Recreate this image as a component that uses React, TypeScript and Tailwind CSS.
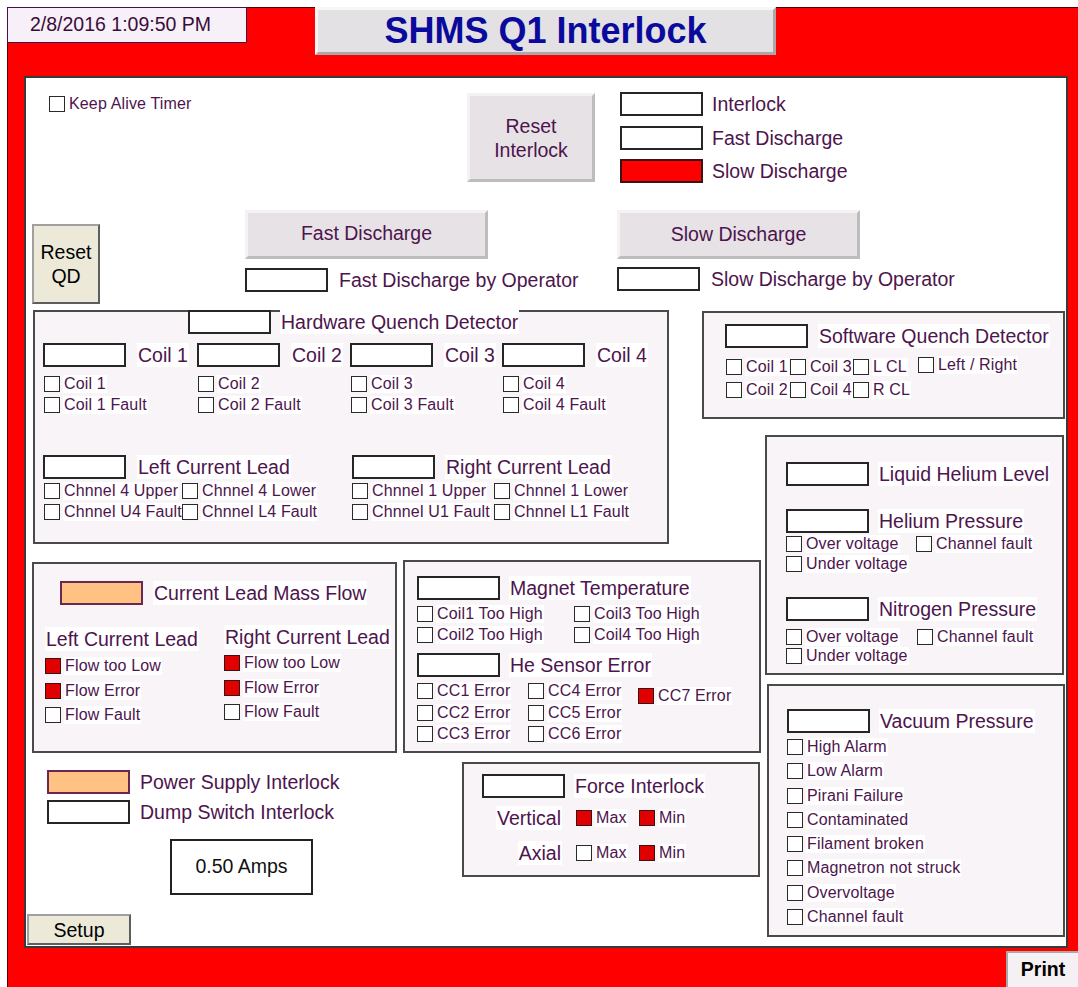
import React from "react";

type Fill = "white" | "red" | "orange";

function Box({ fill = "white" }: { fill?: Fill }) {
  const color =
    fill === "red"
      ? "bg-[#ff0000] border-[#3a1414]"
      : fill === "orange"
      ? "bg-[#ffc283] border-[#6a2850]"
      : "bg-white border-[#262626]";
  return <div className={"w-[83px] h-[24px] border-2 shrink-0 " + color} />;
}

function Lbl({ children, className = "" }: { children: React.ReactNode; className?: string }) {
  return (
    <span
      className={
        "text-[19.5px] leading-[24px] text-[#4d144d] bg-white px-[1px] whitespace-nowrap " + className
      }
    >
      {children}
    </span>
  );
}

function Check({ label, on = false }: { label: string; on?: boolean }) {
  return (
    <div className="flex items-center h-[16px]">
      <span
        className={
          "w-[16px] h-[16px] border-[1.5px] shrink-0 " +
          (on ? "bg-[#e00000] border-[#3a1414]" : "bg-white border-[#2a2a2a]")
        }
      />
      <span className="ml-[3px] text-[16px] leading-[18px] tracking-[0.15px] text-[#4d144d] bg-white px-[1px] whitespace-nowrap">
        {label}
      </span>
    </div>
  );
}

function Ind({ label, fill, gap = "ml-[9px]", className = "" }: { label: string; fill?: Fill; gap?: string; className?: string }) {
  return (
    <div className={"flex items-center " + className}>
      <Box fill={fill} />
      <Lbl className={gap}>{label}</Lbl>
    </div>
  );
}

const panel = "border-2 border-[#4a4a4a] bg-[#f8f4f8] shrink-0";
const hmiBtn =
  "bg-[#e6e2e6] border-[3px] border-t-[#f4f2f4] border-l-[#f4f2f4] border-b-[#bdbdbd] border-r-[#bdbdbd] text-[19.5px] leading-[24px] text-[#4d144d] flex flex-col items-center justify-center shrink-0";
const winBtn =
  "bg-[#ece9d8] border-2 border-[#a0a0a0] border-b-[#5e5e5e] border-r-[#5e5e5e] text-[19.5px] leading-[24px] text-black flex flex-col items-center justify-center shrink-0";

function HardwareQD() {
  const coils = [1, 2, 3, 4];
  return (
    <div className={panel + " ml-[7px] w-[636px] h-[234px]"}>
      <Ind className="-mt-[2px] ml-[153px]" label="Hardware Quench Detector" />
      <div className="mt-[9px] ml-[8px] grid grid-cols-[154px_153px_152px_auto]">
        {coils.map((c) => (
          <div key={c}>
            <Ind label={"Coil " + c} gap="ml-[11px]" />
            <div className="ml-[1px] mt-[9px] flex flex-col gap-[5px]">
              <Check label={"Coil " + c} />
              <Check label={"Coil " + c + " Fault"} />
            </div>
          </div>
        ))}
      </div>
      <div className="mt-[42px] ml-[8px] flex items-start">
        <div className="w-[309px] shrink-0">
          <Ind label="Left Current Lead" gap="ml-[11px]" />
          <div className="mt-[4px] ml-[1px] grid grid-cols-[138px_auto] gap-y-[5px]">
            <Check label="Chnnel 4 Upper" />
            <Check label="Chnnel 4 Lower" />
            <Check label="Chnnel U4 Fault" />
            <Check label="Chnnel L4 Fault" />
          </div>
        </div>
        <div>
          <Ind label="Right Current Lead" gap="ml-[10px]" />
          <div className="mt-[4px] grid grid-cols-[142px_auto] gap-y-[5px]">
            <Check label="Chnnel 1 Upper" />
            <Check label="Chnnel 1 Lower" />
            <Check label="Chnnel U1 Fault" />
            <Check label="Chnnel L1 Fault" />
          </div>
        </div>
      </div>
    </div>
  );
}

function SoftwareQD() {
  return (
    <div className={panel + " mt-[1px] w-[363px] h-[108px]"}>
      <Ind className="ml-[21px] mt-[11px]" label="Software Quench Detector" gap="ml-[10px]" />
      <div className="ml-[22px] mt-[11px] grid grid-cols-[64px_63px_65px_auto] gap-y-[7px]">
        <Check label="Coil 1" />
        <Check label="Coil 3" />
        <Check label="L CL" />
        <div className="-mt-[2px]">
          <Check label="Left / Right" />
        </div>
        <Check label="Coil 2" />
        <Check label="Coil 4" />
        <Check label="R CL" />
        <div />
      </div>
    </div>
  );
}

function Helium() {
  return (
    <div className={panel + " ml-[63px] mt-[16px] w-[299px] h-[240px]"}>
      <div className="ml-[19px] mt-[25px]">
        <Ind label="Liquid Helium Level" />
        <Ind className="mt-[23px]" label="Helium Pressure" />
        <div className="mt-[3px] grid grid-cols-[130px_auto] gap-y-[4px]">
          <Check label="Over voltage" />
          <Check label="Channel fault" />
          <Check label="Under voltage" />
        </div>
        <Ind className="mt-[25px]" label="Nitrogen Pressure" />
        <div className="mt-[8px] grid grid-cols-[131px_auto] gap-y-[3px]">
          <Check label="Over voltage" />
          <Check label="Channel fault" />
          <Check label="Under voltage" />
        </div>
      </div>
    </div>
  );
}

function Vacuum() {
  const items = [
    "High Alarm",
    "Low Alarm",
    "Pirani Failure",
    "Contaminated",
    "Filament broken",
    "Magnetron not struck",
    "Overvoltage",
    "Channel fault",
  ];
  return (
    <div className={panel + " ml-[65px] mt-[9px] w-[298px] h-[253px]"}>
      <Ind className="ml-[18px] mt-[23px]" label="Vacuum Pressure" />
      <div className="ml-[18px] mt-[6px] flex flex-col gap-[8.3px]">
        {items.map((i) => (
          <Check key={i} label={i} />
        ))}
      </div>
    </div>
  );
}

function MassFlow() {
  return (
    <div className={panel + " ml-[6px] mt-[2px] w-[365px] h-[191px]"}>
      <Ind className="ml-[26px] mt-[17px]" label="Current Lead Mass Flow" fill="orange" gap="ml-[10px]" />
      <div className="ml-[11px] mt-[22px] flex items-start">
        <div className="w-[179px] shrink-0">
          <div className="flex">
            <Lbl>Left Current Lead</Lbl>
          </div>
          <div className="mt-[7px] flex flex-col gap-[8.5px]">
            <Check label="Flow too Low" on />
            <Check label="Flow Error" on />
            <Check label="Flow Fault" />
          </div>
        </div>
        <div className="-mt-[2px]">
          <div className="flex">
            <Lbl>Right Current Lead</Lbl>
          </div>
          <div className="mt-[6px] flex flex-col gap-[8.5px]">
            <Check label="Flow too Low" on />
            <Check label="Flow Error" on />
            <Check label="Flow Fault" />
          </div>
        </div>
      </div>
    </div>
  );
}

function Magnet() {
  return (
    <div className={panel + " ml-[6px] w-[358px] h-[193px]"}>
      <Ind className="ml-[12px] mt-[14px]" label="Magnet Temperature" />
      <div className="ml-[12px] mt-[6px] grid grid-cols-[157px_auto] gap-y-[5px]">
        <Check label="Coil1 Too High" />
        <Check label="Coil3 Too High" />
        <Check label="Coil2 Too High" />
        <Check label="Coil4 Too High" />
      </div>
      <Ind className="ml-[12px] mt-[10px]" label="He Sensor Error" />
      <div className="ml-[12px] mt-[6px] flex items-start">
        <div className="w-[111px] shrink-0 flex flex-col gap-[5.5px]">
          <Check label="CC1 Error" />
          <Check label="CC2 Error" />
          <Check label="CC3 Error" />
        </div>
        <div className="w-[110px] shrink-0 flex flex-col gap-[5.5px]">
          <Check label="CC4 Error" />
          <Check label="CC5 Error" />
          <Check label="CC6 Error" />
        </div>
        <div className="mt-[5px]">
          <Check label="CC7 Error" on />
        </div>
      </div>
    </div>
  );
}

function Force() {
  return (
    <div className={panel + " w-[298px] h-[115px]"}>
      <Ind className="ml-[18px] mt-[10px]" label="Force Interlock" />
      <div className="mt-[9px] h-[22px] flex items-center">
        <div className="w-[98px] shrink-0 flex justify-end">
          <Lbl>Vertical</Lbl>
        </div>
        <div className="ml-[14px] w-[63px] shrink-0">
          <Check label="Max" on />
        </div>
        <Check label="Min" on />
      </div>
      <div className="mt-[13px] h-[22px] flex items-center">
        <div className="w-[98px] shrink-0 flex justify-end">
          <Lbl>Axial</Lbl>
        </div>
        <div className="ml-[14px] w-[63px] shrink-0">
          <Check label="Max" />
        </div>
        <Check label="Min" on />
      </div>
    </div>
  );
}

export default function App() {
  return (
    <div className="w-[1078px] h-[987px] bg-white overflow-hidden font-['Liberation_Sans',Arial,sans-serif]">
      <div className="ml-[7px] mt-[7px] w-[1071px] h-[980px] bg-[#ff0000] border-l border-t border-[#5a0000]">
        {/* title bar */}
        <div className="flex items-start h-[68px]">
          <div className="-ml-px -mt-px w-[240px] h-[36px] bg-[#f8f0f8] border border-[#4a104a] flex items-center pl-[22px] text-[19.5px] text-[#3a0c3a] whitespace-nowrap">
            2/8/2016 1:09:50 PM
          </div>
          <div className="ml-[68px] -mt-px w-[461px] h-[48px] bg-[#e4e1e4] border-[3px] border-t-[#f6f6f6] border-l-[#f6f6f6] border-b-[#a9a9a9] border-r-[#a9a9a9] flex items-center justify-center text-[36px] leading-none font-bold text-[#0a0a9c]">
            SHMS Q1 Interlock
          </div>
        </div>

        {/* main screen */}
        <div className="ml-[16px] w-[1044px] h-[872px] bg-white border-2 border-[#3a3a3a]">
          <div className="flex h-[232px]">
            <div className="w-[219px] shrink-0">
              <div className="ml-[23px] mt-[18px]">
                <Check label="Keep Alive Timer" />
              </div>
              <div className={winBtn + " ml-[6px] mt-[112px] w-[68px] h-[80px]"}>
                <span>Reset</span>
                <span>QD</span>
              </div>
            </div>
            <div className="flex-1">
              <div className="flex items-start mt-[14px] ml-[222px]">
                <div className={hmiBtn + " mt-[1px] w-[128px] h-[89px]"}>
                  <span>Reset</span>
                  <span>Interlock</span>
                </div>
                <div className="ml-[25px] flex flex-col gap-[9.5px]">
                  <div className="flex items-center">
                    <Box />
                    <Lbl className="ml-[8px] text-[#1e1e1e]">Interlock</Lbl>
                  </div>
                  <Ind label="Fast Discharge" gap="ml-[8px]" />
                  <Ind label="Slow Discharge" fill="red" gap="ml-[8px]" />
                </div>
              </div>
              <div className="flex items-start mt-[27px]">
                <div className="w-[372px] shrink-0">
                  <div className={hmiBtn + " w-[243px] h-[49px] pb-[4px]"}>Fast Discharge</div>
                  <Ind className="mt-[9px]" label="Fast Discharge by Operator" gap="ml-[10px]" />
                </div>
                <div>
                  <div className={hmiBtn + " w-[243px] h-[49px] pb-[2px]"}>Slow Discharge</div>
                  <Ind className="mt-[8px]" label="Slow Discharge by Operator" gap="ml-[10px]" />
                </div>
              </div>
            </div>
          </div>

          <div className="flex items-start">
            <div className="w-[676px] shrink-0">
              <HardwareQD />
              <div className="flex items-start mt-[16px]">
                <MassFlow />
                <Magnet />
              </div>
              <div className="flex items-start mt-[9px]">
                <div className="w-[436px] shrink-0">
                  <Ind className="ml-[21px] mt-[8px]" label="Power Supply Interlock" fill="orange" />
                  <Ind className="ml-[21px] mt-[6px]" label="Dump Switch Interlock" />
                  <div className="ml-[144px] mt-[15px] w-[143px] h-[56px] border-2 border-[#222] bg-white flex items-center justify-center text-[19.5px] text-[#111]">
                    0.50 Amps
                  </div>
                  <div className={winBtn + " ml-[1px] mt-[19px] w-[104px] h-[31px]"}>Setup</div>
                </div>
                <Force />
              </div>
            </div>
            <div>
              <SoftwareQD />
              <Helium />
              <Vacuum />
            </div>
          </div>
        </div>

        <div className="flex justify-end mt-[3px]">
          <div className="w-[72px] h-[36px] bg-[#f4f0f4] border-l-2 border-t-2 border-[#a8a8a8] flex items-center justify-center text-[19.5px] font-bold text-black">
            Print
          </div>
        </div>
      </div>
    </div>
  );
}
